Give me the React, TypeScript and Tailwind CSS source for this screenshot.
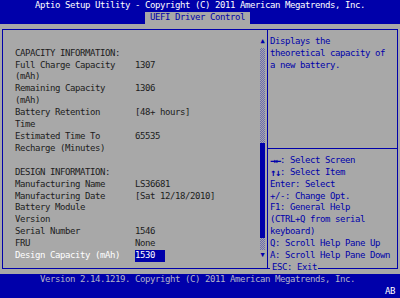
const rows: { label: string; value?: string; selected?: boolean }[] = [
  { label: '' },
  { label: 'CAPACITY INFORMATION:' },
  { label: 'Full Charge Capacity', value: '1307' },
  { label: '(mAh)' },
  { label: 'Remaining Capacity', value: '1306' },
  { label: '(mAh)' },
  { label: 'Battery Retention', value: '[48+ hours]' },
  { label: 'Time' },
  { label: 'Estimated Time To', value: '65535' },
  { label: 'Recharge (Minutes)' },
  { label: '' },
  { label: 'DESIGN INFORMATION:' },
  { label: 'Manufacturing Name', value: 'LS36681' },
  { label: 'Manufacturing Date', value: '[Sat 12/18/2010]' },
  { label: 'Battery Module' },
  { label: 'Version' },
  { label: 'Serial Number', value: '1546' },
  { label: 'FRU', value: 'None' },
  { label: 'Design Capacity (mAh)', value: '1530', selected: true },
];

const helpText = ['Displays the', 'theoretical capacity of', 'a new battery.'];

// first two entries carry arrow glyphs drawn one per cell
const keyHelp: { arrows?: string[]; text: string }[] = [
  { arrows: ['→', '←'], text: ': Select Screen' },
  { arrows: ['↑', '↓'], text: ': Select Item' },
  { text: 'Enter: Select' },
  { text: '+/-: Change Opt.' },
  { text: 'F1: General Help' },
  { text: '(CTRL+Q from serial' },
  { text: 'keyboard)' },
  { text: 'Q: Scroll Help Pane Up' },
  { text: 'A: Scroll Help Pane Down' },
];

function Row({ children, className = '' }: { children?: React.ReactNode; className?: string }) {
  return <div className={`h-[11.92px] leading-[11.92px] whitespace-pre ${className}`}>{children}</div>;
}

function ScrollBar() {
  const track = 'bg-[repeating-conic-gradient(#6a6ab4_0_25%,#a8a8a8_0_50%)] bg-[length:2px_2px]';
  return (
    <div className="w-[5px] flex flex-col text-[#0000aa]">
      <Row className="text-[7px] text-center">▲</Row>
      <div className={`h-[95.36px] ${track}`} />
      <div className="h-[95.36px] bg-[#0000aa]" />
      <div className={`h-[11.92px] ${track}`} />
      <Row className="text-[7px] text-center">▼</Row>
    </div>
  );
}

export default function App() {
  return (
    <div className="w-[400px] h-[298px] bg-[#a8a8a8] overflow-hidden font-['DejaVu_Sans_Mono',monospace] text-[9px] tracking-[-0.42px]">
      {/* header */}
      <div className="bg-[#0000aa]">
        <Row className="pl-[35px] text-white">Aptio Setup Utility - Copyright (C) 2011 American Megatrends, Inc.</Row>
        <Row>
          <div className="ml-[145px] w-[105px] h-full bg-[#a8a8a8] text-[#0000aa] pl-[5px]">UEFI Driver Control</div>
        </Row>
      </div>

      {/* main box */}
      <div className="h-[250.32px] pt-[5.46px]">
        <div className="relative ml-[2px] w-[396px] border border-[#0000aa] flex">
          <div className="w-[264px] pt-[5.46px] pb-[5.46px] flex">
            <div className="w-[257px] pl-[12px] text-[#1c1c1c]">
              {rows.map((r, i) => (
                <Row key={i} className="flex">
                  <span className={`w-[120px] ${r.selected ? 'text-white' : ''}`}>{r.label}</span>
                  {r.value && (
                    <span className={r.selected ? 'w-[30px] bg-[#0000aa] text-white' : ''}>{r.value}</span>
                  )}
                </Row>
              ))}
            </div>
            <ScrollBar />
          </div>
          <div className="flex-1 border-l border-[#0000aa] pt-[5.46px] pb-[5.46px] text-[#0000aa]">
            {helpText.map((t) => (
              <Row key={t} className="pl-[2px]">{t}</Row>
            ))}
            {Array.from({ length: 6 }).map((_, i) => (
              <Row key={i} />
            ))}
            <Row className="flex items-center">
              <div className="w-full h-px bg-[#0000aa]" />
            </Row>
            {keyHelp.map((k) => (
              <Row key={k.text} className="pl-[2px] flex">
                {k.arrows?.map((a) => (
                  <span key={a} className="inline-block w-[5px] text-center font-bold text-[10px] tracking-normal overflow-visible">
                    {a}
                  </span>
                ))}
                <span>{k.text}</span>
              </Row>
            ))}
          </div>
          <div className="absolute left-[267px] bottom-[-6.5px] pl-[2px] pr-px h-[11.92px] leading-[11.92px] bg-[#a8a8a8] text-[#0000aa] whitespace-pre">
            ESC: Exit
          </div>
        </div>
      </div>

      {/* footer */}
      <div className="bg-[#0000aa] h-[23.84px]">
        <Row className="pl-[40px] text-[#b4b4c8]">Version 2.14.1219. Copyright (C) 2011 American Megatrends, Inc.</Row>
        <Row className="text-right pr-[5px] text-white">AB</Row>
      </div>
    </div>
  );
}
